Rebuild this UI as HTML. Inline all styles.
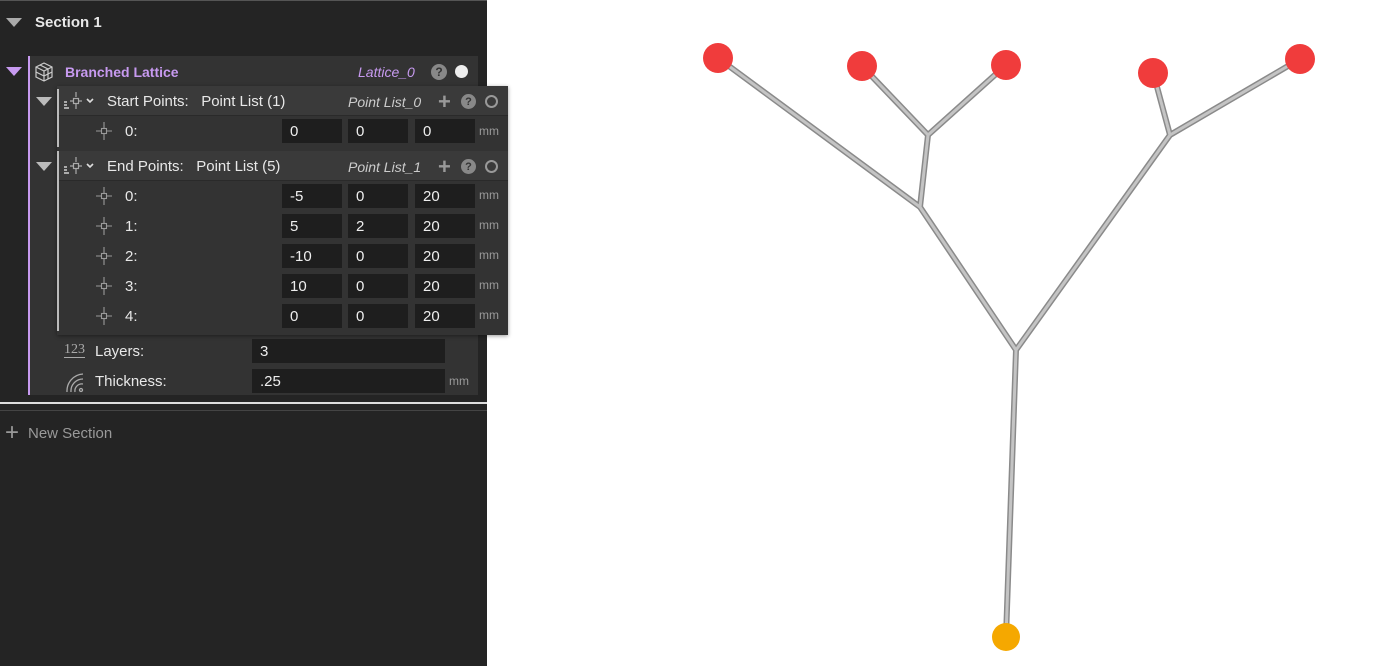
<!DOCTYPE html>
<html><head><meta charset="utf-8"><style>
*{margin:0;padding:0;box-sizing:border-box}
body{width:1383px;height:666px;background:#fff;font-family:"Liberation Sans",sans-serif;position:relative;overflow:hidden}
.p{position:absolute}
.panel{left:0;top:0;width:487px;height:666px;background:#242424;border-top:1px solid #555}
.t{color:#e8e8e8;font-size:14px;position:absolute;white-space:nowrap}
.tri{position:absolute;width:0;height:0;border-left:8px solid transparent;border-right:8px solid transparent;border-top:9px solid #bbb}
.in{position:absolute;background:#1e1e1e;height:24px;color:#eee;font-size:15px;padding:4px 8px}
.mm{position:absolute;color:#999;font-size:12px}
.ic{position:absolute;width:16px;height:16px;border-radius:50%}
.pt{position:absolute}
</style></head><body>
<div class="p panel"></div>
<div class="tri" style="left:6px;top:18px;border-top-color:#aaa"></div>
<div class="t" style="left:35px;top:14px;font-size:15px;font-weight:bold">Section 1</div>
<div class="p" style="left:28px;top:56px;width:450px;height:339px;background:#333;border-left:2px solid #c79af0"></div>
<div class="tri" style="left:6px;top:67px;border-top-color:#c79af0"></div>
<svg class="p" style="left:33px;top:61px" width="22" height="22" viewBox="0 0 22 22" fill="none" stroke="#ccc" stroke-width="1.2"><path d="M3 6l8-4 8 4v10l-8 4-8-4z M3 6l8 4 8-4 M11 10v10 M3 11l8 4 8-4 M7 4l8 4v10"/></svg>
<div class="t" style="left:65px;top:64px;color:#c79af0;font-weight:bold">Branched Lattice</div>
<div class="t" style="left:358px;top:64px;color:#c79af0;font-style:italic">Lattice_0</div>
<div class="ic" style="left:431px;top:64px;background:#888;color:#333;font-size:12px;font-weight:bold;text-align:center;line-height:16px">?</div>
<div class="ic" style="left:455px;top:65px;width:13px;height:13px;background:#eee"></div>
<div class="p" style="left:57px;top:86px;width:451px;height:249px;background:#333;box-shadow:0 1px 4px rgba(0,0,0,.4)"></div>
<div class="p" style="left:57px;top:86px;width:451px;height:30px;background:#3a3a3a;border-bottom:1px solid #2a2a2a"></div>
<div class="p" style="left:57px;top:151px;width:451px;height:30px;background:#3a3a3a;border-bottom:1px solid #2a2a2a"></div>
<div class="p" style="left:57px;top:89px;width:2px;height:58px;background:#bbb"></div>
<div class="p" style="left:57px;top:151px;width:2px;height:180px;background:#bbb"></div>
<div class="tri" style="left:36px;top:97px"></div>
<div class="tri" style="left:36px;top:162px"></div>
<svg class="p" style="left:62px;top:90px" width="38" height="22" viewBox="0 0 38 22" fill="none" stroke="#aaa" stroke-width="1.2"><path d="M14 2v5M14 14v5M8 11h3M17 11h3"/><rect x="11.5" y="8.5" width="5" height="5"/><path d="M2 12h3M2 15h3M2 18h5" stroke-width="2"/><path d="M25 9l3 3 3-3" stroke="#ddd" stroke-width="1.6"/></svg>
<svg class="p" style="left:62px;top:155px" width="38" height="22" viewBox="0 0 38 22" fill="none" stroke="#aaa" stroke-width="1.2"><path d="M14 2v5M14 14v5M8 11h3M17 11h3"/><rect x="11.5" y="8.5" width="5" height="5"/><path d="M2 12h3M2 15h3M2 18h5" stroke-width="2"/><path d="M25 9l3 3 3-3" stroke="#ddd" stroke-width="1.6"/></svg>
<div class="t" style="left:107px;top:93px;font-size:15px">Start Points:&nbsp;&nbsp; Point List (1)</div>
<div class="t" style="left:107px;top:158px;font-size:15px">End Points:&nbsp;&nbsp; Point List (5)</div>
<div class="t" style="left:348px;top:94px;font-style:italic;color:#ccc">Point List_0</div>
<div class="t" style="left:348px;top:159px;font-style:italic;color:#ccc">Point List_1</div>
<div class="t" style="left:438px;top:89px;font-size:22px;color:#999;font-weight:bold">+</div>
<div class="t" style="left:438px;top:154px;font-size:22px;color:#999;font-weight:bold">+</div>
<div class="ic" style="left:461px;top:94px;background:#888;color:#333;font-size:11px;font-weight:bold;text-align:center;line-height:16px;width:15px;height:15px">?</div>
<div class="ic" style="left:461px;top:159px;background:#888;color:#333;font-size:11px;font-weight:bold;text-align:center;line-height:16px;width:15px;height:15px">?</div>
<div class="ic" style="left:485px;top:95px;width:13px;height:13px;border:2px solid #999"></div>
<div class="ic" style="left:485px;top:160px;width:13px;height:13px;border:2px solid #999"></div>

<svg width="0" height="0" style="position:absolute"><defs><symbol id="x" viewBox="0 0 20 20"><g fill="none" stroke="#999" stroke-width="1.1"><path d="M10 1v6M10 13v6M2 10h5M13 10h5"/><rect x="7.5" y="7.5" width="5" height="5"/></g></symbol></defs></svg>
<svg class="pt" style="left:94px;top:121px" width="20" height="20"><use href="#x"/></svg>
<div class="t" style="left:125px;top:123px;font-size:15px">0:</div>
<div class="in" style="left:282px;top:119px;width:60px">0</div>
<div class="in" style="left:348px;top:119px;width:60px">0</div>
<div class="in" style="left:415px;top:119px;width:60px">0</div>
<div class="mm" style="left:479px;top:124px">mm</div>

<svg class="pt" style="left:94px;top:186px" width="20" height="20"><use href="#x"/></svg><div class="t" style="left:125px;top:188px;font-size:15px">0:</div>
<div class="in" style="left:282px;top:184px;width:60px">-5</div><div class="in" style="left:348px;top:184px;width:60px">0</div><div class="in" style="left:415px;top:184px;width:60px">20</div><div class="mm" style="left:479px;top:188px">mm</div>
<svg class="pt" style="left:94px;top:216px" width="20" height="20"><use href="#x"/></svg><div class="t" style="left:125px;top:218px;font-size:15px">1:</div>
<div class="in" style="left:282px;top:214px;width:60px">5</div><div class="in" style="left:348px;top:214px;width:60px">2</div><div class="in" style="left:415px;top:214px;width:60px">20</div><div class="mm" style="left:479px;top:218px">mm</div>
<svg class="pt" style="left:94px;top:246px" width="20" height="20"><use href="#x"/></svg><div class="t" style="left:125px;top:248px;font-size:15px">2:</div>
<div class="in" style="left:282px;top:244px;width:60px">-10</div><div class="in" style="left:348px;top:244px;width:60px">0</div><div class="in" style="left:415px;top:244px;width:60px">20</div><div class="mm" style="left:479px;top:248px">mm</div>
<svg class="pt" style="left:94px;top:276px" width="20" height="20"><use href="#x"/></svg><div class="t" style="left:125px;top:278px;font-size:15px">3:</div>
<div class="in" style="left:282px;top:274px;width:60px">10</div><div class="in" style="left:348px;top:274px;width:60px">0</div><div class="in" style="left:415px;top:274px;width:60px">20</div><div class="mm" style="left:479px;top:278px">mm</div>
<svg class="pt" style="left:94px;top:306px" width="20" height="20"><use href="#x"/></svg><div class="t" style="left:125px;top:308px;font-size:15px">4:</div>
<div class="in" style="left:282px;top:304px;width:60px">0</div><div class="in" style="left:348px;top:304px;width:60px">0</div><div class="in" style="left:415px;top:304px;width:60px">20</div><div class="mm" style="left:479px;top:308px">mm</div>

<div class="t" style="left:64px;top:342px;color:#aaa;font-family:'Liberation Serif',serif;font-size:14px;border-bottom:1px solid #aaa;line-height:15px">123</div>
<div class="t" style="left:95px;top:343px;font-size:15px">Layers:</div>
<div class="in" style="left:252px;top:339px;width:193px">3</div>
<svg class="p" style="left:64px;top:369px" width="22" height="24" viewBox="0 0 22 24" fill="none" stroke="#aaa" stroke-width="1.3"><path d="M3 23A17 17 0 0 1 19 5M7 23A12 12 0 0 1 19 10M11 23A7 7 0 0 1 19 15"/><circle cx="17" cy="21" r="1.5"/></svg>
<div class="t" style="left:95px;top:373px;font-size:15px">Thickness:</div>
<div class="in" style="left:252px;top:369px;width:193px">.25</div>
<div class="mm" style="left:449px;top:374px">mm</div>

<div class="p" style="left:0;top:402px;width:487px;height:2px;background:#ddd"></div>
<div class="p" style="left:0;top:410px;width:487px;height:1px;background:#444"></div>
<div class="t" style="left:5px;top:419px;color:#999;font-size:24px">+</div>
<div class="t" style="left:28px;top:425px;color:#999;font-size:15px">New Section</div>

<svg class="p" style="left:0;top:0" width="1383" height="666">
<g stroke="#8a8a8a" stroke-width="6" fill="none" stroke-linecap="round">
<path d="M1006 637L1016 350L920 207L718 58M920 207L928 135L862 66M928 135L1006 65M1016 350L1170 135L1153 72M1170 135L1300 59"/>
</g>
<g stroke="#c4c4c4" stroke-width="3" fill="none" stroke-linecap="round">
<path d="M1006 637L1016 350L920 207L718 58M920 207L928 135L862 66M928 135L1006 65M1016 350L1170 135L1153 72M1170 135L1300 59"/>
</g>
<g fill="#f03c3c"><circle cx="718" cy="58" r="15"/><circle cx="862" cy="66" r="15"/><circle cx="1006" cy="65" r="15"/><circle cx="1153" cy="73" r="15"/><circle cx="1300" cy="59" r="15"/></g>
<circle cx="1006" cy="637" r="14" fill="#f5a800"/>
</svg>
</body></html>
